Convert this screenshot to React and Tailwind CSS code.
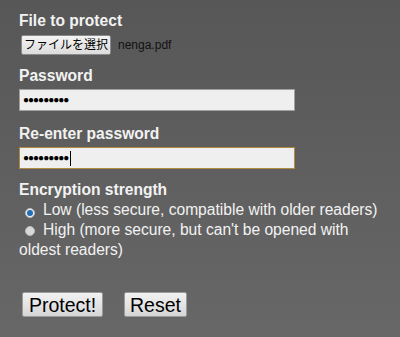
import React from "react";

const App = () => {
  return (
    <div
      className="w-[400px] h-[337px] overflow-hidden bg-gradient-to-b from-[#575757] to-[#676767] px-[19px] pt-[12px] text-[15.6px] text-[#f2f2f2]"
      style={{ fontFamily: '"Liberation Sans", Arial, "Noto Sans CJK JP", sans-serif' }}
    >
      {/* FILE */}
      <div className="font-bold leading-[18px]">File to protect</div>
      <div className="mt-[5px] flex items-center">
        <button className="ml-[2px] h-[20px] w-[90px] rounded-[2px] border border-[#8a8a8a] bg-gradient-to-b from-[#f4f4f4] to-[#dcdcdc] text-[12px] leading-[18px] text-black">
          ファイルを選択
        </button>
        <span className="ml-[7px] text-[12px] text-[#111]">nenga.pdf</span>
      </div>

      {/* PASSWORD */}
      <div className="mt-[12px] font-bold leading-[18px]">Password</div>
      <div className="mt-[4px] w-[276px] h-[22px] border border-[#a0a0a0] bg-[#efefef] flex items-center px-[3px]">
        <span className="text-[10px] tracking-[-1px] text-black leading-none">●●●●●●●●●</span>
      </div>

      {/* RE-ENTER */}
      <div className="mt-[14px] font-bold leading-[18px]">Re-enter password</div>
      <div className="mt-[4px] w-[276px] h-[22px] border border-[#b08a3e] bg-[#efefef] flex items-center px-[3px]">
        <span className="text-[10px] tracking-[-1px] text-black leading-none">●●●●●●●●●</span>
        <span className="ml-[2px] w-px h-[15px] bg-black" />
      </div>

      {/* STRENGTH */}
      <div className="mt-[12px] font-bold leading-[18px]">Encryption strength</div>
      <div className="mt-[1px] leading-[20px]">
        <div className="whitespace-nowrap">
          <span className="inline-flex items-center justify-center ml-[6px] w-[10px] h-[10px] rounded-full bg-[#f0f0f0] border border-[#bbb] align-[-1px]">
            <span className="w-[6px] h-[6px] rounded-full bg-[#1f6fb5]" />
          </span>
          <span className="ml-[8px]">Low (less secure, compatible with older readers)</span>
        </div>
        <div>
          <span className="inline-block ml-[6px] w-[10px] h-[10px] rounded-full bg-[#d8d8d8] border border-[#bbb] align-[-1px]" />
          <span className="ml-[8px]">High (more secure, but can't be opened with oldest readers)</span>
        </div>
      </div>

      {/* BUTTONS */}
      <div className="mt-[32px] flex gap-[21px] ml-[3px]">
        <button className="h-[25px] w-[81px] rounded-[2px] border border-[#9a9a9a] bg-gradient-to-b from-[#f2f2f2] to-[#d6d6d6] text-[19.5px] leading-[22px] text-black">
          Protect!
        </button>
        <button className="h-[25px] w-[63px] rounded-[2px] border border-[#9a9a9a] bg-gradient-to-b from-[#f2f2f2] to-[#d6d6d6] text-[19.5px] leading-[22px] text-black">
          Reset
        </button>
      </div>
    </div>
  );
};

export default App;
